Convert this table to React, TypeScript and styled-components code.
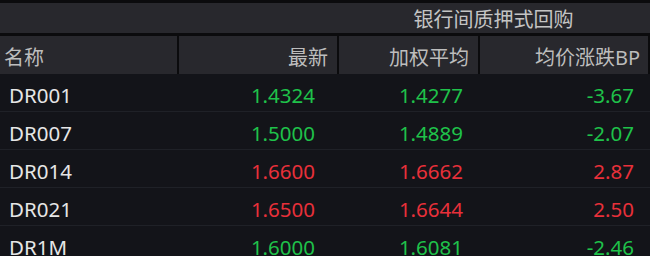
import React from "react";
import styled, { createGlobalStyle } from "styled-components";

const Global = createGlobalStyle`
  html, body { margin: 0; padding: 0; background: #131419; }
  body { width: 650px; height: 256px; overflow: hidden; }
`;

const COLS = "177px 158px 139px 168px";

const Panel = styled.div`
  width: 650px;
  height: 256px;
  background: #131419;
  font-family: "Noto Sans", "Noto Sans CJK SC", sans-serif;
  overflow: hidden;
  border-top: 3px solid #0b0b0d;
  box-sizing: border-box;
`;

const GroupBar = styled.div`
  display: grid;
  grid-template-columns: 339px 309px;
  height: 30px;
  background: #28282d;
  border-bottom: 3px solid #0b0b0d;
`;

const GroupTitle = styled.div`
  grid-column: 2;
  display: flex;
  align-items: center;
  justify-content: center;
  color: #c4c4c4;
  font-size: 20px;
  padding-top: 1px;
`;

const HeaderRow = styled.div`
  display: grid;
  grid-template-columns: ${COLS};
  column-gap: 2px;
  height: 38px;
  background: #0b0b0d;
  padding-right: 2px;
`;

const HeadCell = styled.div<{ $align?: "left" | "right"; $pad: number }>`
  background: #28282d;
  display: flex;
  align-items: center;
  justify-content: ${(p) => (p.$align === "left" ? "flex-start" : "flex-end")};
  padding: 2px ${(p) => (p.$align === "left" ? 0 : p.$pad)}px 0 ${(p) => (p.$align === "left" ? p.$pad : 0)}px;
  color: #bdbdbd;
  font-size: 20px;
`;

const Row = styled.div`
  display: grid;
  grid-template-columns: ${COLS};
  column-gap: 2px;
  height: 37px;
  border-bottom: 1px solid #1f2127;
  padding-right: 2px;
`;

const Cell = styled.div<{ $align?: "left" | "right"; $pad: number; $tone?: "up" | "down" | "name" }>`
  display: flex;
  align-items: center;
  justify-content: ${(p) => (p.$align === "left" ? "flex-start" : "flex-end")};
  padding: 5px ${(p) => (p.$align === "left" ? 0 : p.$pad)}px 0 ${(p) => (p.$align === "left" ? p.$pad : 0)}px;
  font-size: 20.5px;
  color: ${(p) => (p.$tone === "up" ? "#e8303a" : p.$tone === "down" ? "#1fc24a" : "#e6e6e6")};
`;

type RowData = { name: string; last: string; avg: string; bp: string };

const rows: RowData[] = [
  { name: "DR001", last: "1.4324", avg: "1.4277", bp: "-3.67" },
  { name: "DR007", last: "1.5000", avg: "1.4889", bp: "-2.07" },
  { name: "DR014", last: "1.6600", avg: "1.6662", bp: "2.87" },
  { name: "DR021", last: "1.6500", avg: "1.6644", bp: "2.50" },
  { name: "DR1M", last: "1.6000", avg: "1.6081", bp: "-2.46" },
];

export default function App() {
  return (
    <>
      <Global />
      <Panel>
        <GroupBar>
          <GroupTitle>银行间质押式回购</GroupTitle>
        </GroupBar>
        <HeaderRow>
          <HeadCell $align="left" $pad={4}>名称</HeadCell>
          <HeadCell $pad={9}>最新</HeadCell>
          <HeadCell $pad={9}>加权平均</HeadCell>
          <HeadCell $pad={8}>均价涨跌BP</HeadCell>
        </HeaderRow>
        {rows.map((r) => {
          const tone = r.bp.startsWith("-") ? "down" : "up";
          return (
            <Row key={r.name}>
              <Cell $align="left" $pad={9} $tone="name">{r.name}</Cell>
              <Cell $pad={22} $tone={tone}>{r.last}</Cell>
              <Cell $pad={15} $tone={tone}>{r.avg}</Cell>
              <Cell $pad={14} $tone={tone}>{r.bp}</Cell>
            </Row>
          );
        })}
      </Panel>
    </>
  );
}
